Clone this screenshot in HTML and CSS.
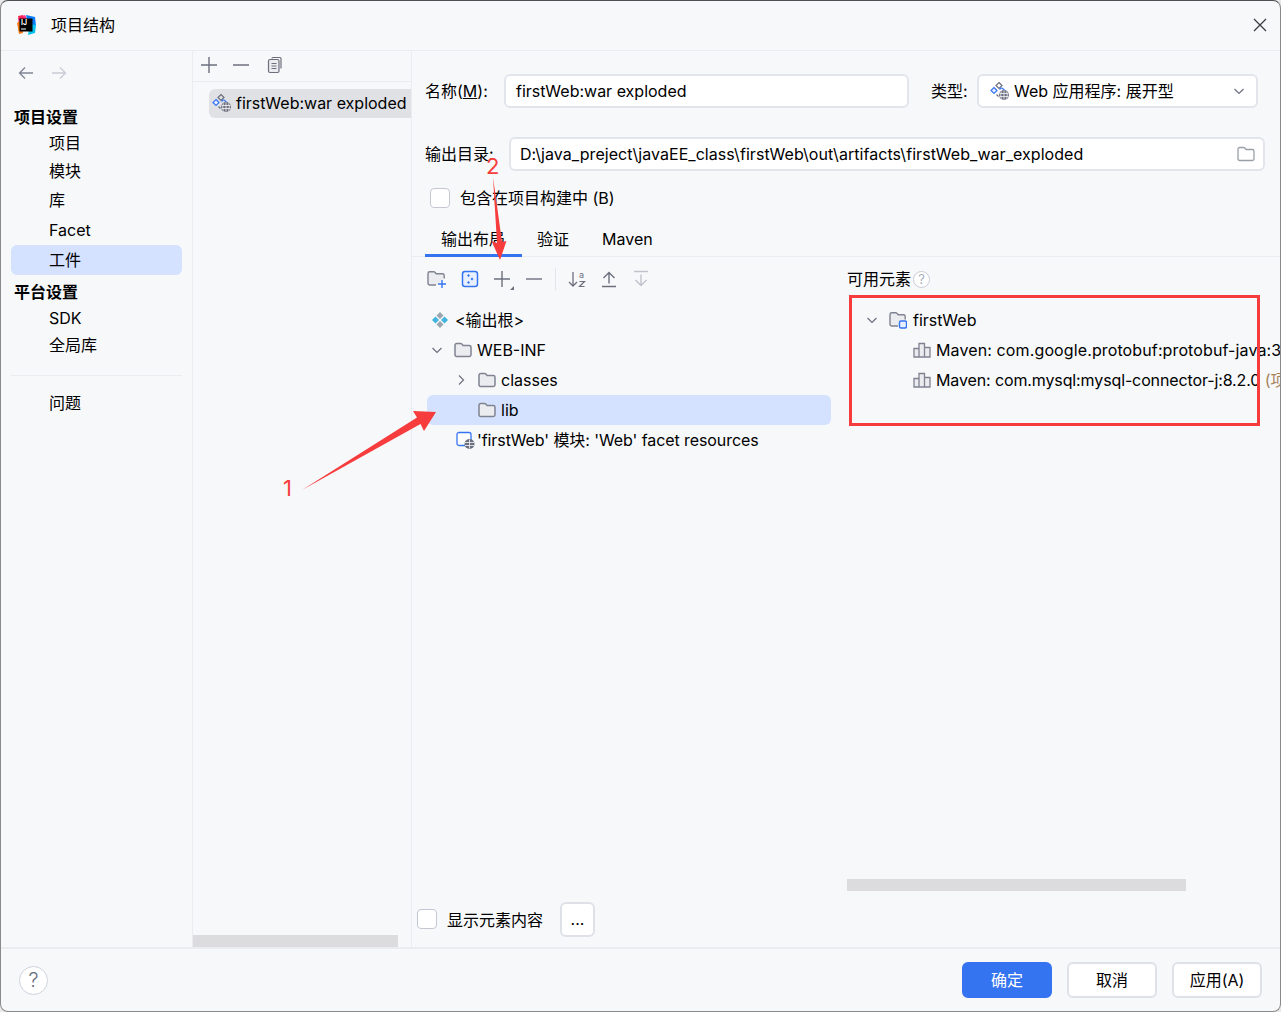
FILE: index.html
```html
<!DOCTYPE html>
<html lang="zh-CN">
<head>
  <meta charset="UTF-8">
  <title>项目结构</title>
  <link rel="stylesheet" href="styles.css">
</head>
<body>

  <svg class="defs" width="0" height="0">
    <symbol id="folder" viewBox="0 0 18 16">
      <path d="M1 3.200C1 2.200 1.800 1.500 2.700 1.500h3.900c.5 0 .9.200 1.200.5l1.300 1.500h6.200c1 0 1.700.7 1.700 1.700v7.600c0 1-.7 1.700-1.700 1.700H2.700c-1 0-1.700-.7-1.700-1.700z" fill="#ebecf0" stroke="#7f8391" stroke-width="1.500"/>
    </symbol>
    <symbol id="artifact" viewBox="0 0 20 20">
      <path d="M9 1.500l3 3-3 3-3-3z" fill="none" stroke="#6c707e" stroke-width="1.200"/>
      <path d="M4 6.500l3 3-3 3-3-3z" fill="#e8f0ff" stroke="#3574f0" stroke-width="1.200"/>
      <path d="M9.500 8.500l1.500-1.500h1l2.500 2" fill="none" stroke="#3574f0" stroke-width="1.200"/>
      <path d="M6.500 13.500l2 2" fill="none" stroke="#6c707e" stroke-width="1.200"/>
      <circle cx="14" cy="14" r="5" fill="#6c707e"/>
      <path d="M9.500 12.500h9M9.500 15.500h9M14 9.500v9M11.500 10.500c-1 2.500-1 5 0 7M16.500 10.500c1 2.500 1 5 0 7" fill="none" stroke="#f7f8fa" stroke-width=".8"/>
    </symbol>
    <symbol id="library" viewBox="0 0 18 16">
      <path d="M1 6.500h5v8.500H1zM6 1.500h5.500V15H6zM11.500 5.500H17V15h-5.500z" fill="#ebecf0" stroke="#7f8391" stroke-width="1.300"/>
    </symbol>
    <symbol id="plus" viewBox="0 0 18 18">
      <path d="M9 1v16M1 9h16" fill="none" stroke="#6c707e" stroke-width="1.400"/>
    </symbol>
    <symbol id="minus" viewBox="0 0 18 18">
      <path d="M1 9h16" fill="none" stroke="#6c707e" stroke-width="1.400"/>
    </symbol>
    <symbol id="chevron-down" viewBox="0 0 12 12">
      <path d="M1.500 4l4.500 4.500L10.500 4" fill="none" stroke="#6c707e" stroke-width="1.200"/>
    </symbol>
    <symbol id="chevron-right" viewBox="0 0 12 12">
      <path d="M4 1.500L8.500 6 4 10.500" fill="none" stroke="#6c707e" stroke-width="1.200"/>
    </symbol>
  </svg>

  <div class="window">

    <div class="titlebar">
      <svg class="logo" width="20" height="20" viewBox="0 0 20 20">
        <path d="M2 3l7-3 2 4-8 6z" fill="#ff318c"/>
        <path d="M1 8l4-3 2 13-4 1z" fill="#f97a12"/>
        <path d="M10 0l9 2 1 9-8-2z" fill="#087cfa"/>
        <path d="M14 9l6 1-1 8-7 2z" fill="#07c3f2"/>
        <path d="M2 1l5-1 1 4-5 1z" fill="#fe2857"/>
        <rect x="3.500" y="3.500" width="13" height="13" fill="#000"/>
        <text class="logo-text" x="5" y="9.500">IJ</text>
        <rect x="5" y="13.500" width="5" height="1" fill="#fff"/>
      </svg>
      <span class="title">项目结构</span>
      <svg class="close" width="14" height="14" viewBox="0 0 14 14">
        <path d="M1 1l12 12M13 1L1 13" fill="none" stroke="#3b3d43" stroke-width="1.300"/>
      </svg>
    </div>

    <div class="content">

      <div class="sidebar">
        <div class="history">
          <svg width="16" height="14" viewBox="0 0 16 14"><path d="M15 7H1.500M7 1.500L1.500 7 7 12.500" fill="none" stroke="#818594" stroke-width="1.300"/></svg>
          <svg width="16" height="14" viewBox="0 0 16 14"><path d="M1 7h13.500M9 1.500L14.500 7 9 12.500" fill="none" stroke="#c9ccd6" stroke-width="1.300"/></svg>
        </div>
        <h4 class="nav-title">项目设置</h4>
        <a class="nav-item h-26" href="#">项目</a>
        <a class="nav-item h-29" href="#">模块</a>
        <a class="nav-item h-30" href="#">库</a>
        <a class="nav-item h-30" href="#">Facet</a>
        <a class="nav-item h-30 active" href="#">工件</a>
        <h4 class="nav-title second">平台设置</h4>
        <a class="nav-item h-26" href="#">SDK</a>
        <a class="nav-item h-28" href="#">全局库</a>
        <div class="nav-sep"></div>
        <a class="nav-item h-28" href="#">问题</a>
      </div>

      <div class="artifacts">
        <div class="artifacts-tools">
          <svg class="tool" width="18" height="18"><use href="#plus"/></svg>
          <svg class="tool" width="18" height="18"><use href="#minus"/></svg>
          <svg class="tool copy-tool" width="18" height="18" viewBox="0 0 18 18">
            <path d="M6 2.500c0-.6.500-1 1-1h7c.6 0 1 .4 1 1v10" fill="none" stroke="#6c707e" stroke-width="1.200"/>
            <rect x="2.500" y="3.500" width="10.500" height="13" rx="1.500" fill="#ebecf0" stroke="#6c707e" stroke-width="1.200"/>
            <path d="M5.500 7.500h5M5.500 10h5M5.500 12.500h5" stroke="#6c707e" stroke-width="1.100"/>
          </svg>
        </div>
        <div class="artifact-item">
          <svg width="20" height="20"><use href="#artifact"/></svg>
          <span>firstWeb:war exploded</span>
        </div>
        <div class="hscroll artifacts-scroll"></div>
      </div>

      <div class="detail">
        <div class="form-row name-row">
          <label class="label-name">名称(<u>M</u>):</label>
          <div class="field field-name">firstWeb:war exploded</div>
          <label class="label-type">类型:</label>
          <div class="field field-type">
            <svg width="20" height="20"><use href="#artifact"/></svg>
            <span>Web 应用程序: 展开型</span>
            <svg class="select-arrow" width="12" height="12"><use href="#chevron-down"/></svg>
          </div>
        </div>

        <div class="form-row dir-row">
          <label class="label-dir">输出目录:</label>
          <div class="field field-dir">
            <span>D:\java_preject\javaEE_class\firstWeb\out\artifacts\firstWeb_war_exploded</span>
            <svg class="dir-folder" width="18" height="16" viewBox="0 0 18 16">
              <path d="M1 3.200C1 2.200 1.800 1.500 2.700 1.500h3.900c.5 0 .9.200 1.200.5l1.300 1.500h6.200c1 0 1.700.7 1.700 1.700v7.600c0 1-.7 1.700-1.700 1.700H2.700c-1 0-1.700-.7-1.700-1.700z" fill="none" stroke="#9a9ea9" stroke-width="1.300"/>
            </svg>
          </div>
        </div>

        <div class="check-row">
          <span class="checkbox"></span>
          <span>包含在项目构建中 (B)</span>
        </div>

        <div class="tabs">
          <a class="tab active" href="#">输出布局</a>
          <a class="tab" href="#">验证</a>
          <a class="tab" href="#">Maven</a>
        </div>

        <div class="layout">
          <div class="layout-left">
            <div class="toolbar">
              <svg class="tool" width="20" height="18" viewBox="0 0 20 18">
                <path d="M9 15H2.800C1.800 15 1 14.300 1 13.300V3.500C1 2.600 1.800 1.800 2.800 1.800h4c.4 0 .8.200 1.100.5l1.300 1.500h6.300c.9 0 1.700.7 1.700 1.700v3" fill="#ebecf0" stroke="#7f8391" stroke-width="1.400"/>
                <path d="M15 10v8M11 14h8" stroke="#3574f0" stroke-width="1.400"/>
              </svg>
              <svg class="tool" width="18" height="18" viewBox="0 0 18 18">
                <rect x="1.500" y="1.500" width="15" height="15" rx="2.500" fill="#e8f0ff" stroke="#3574f0" stroke-width="1.500"/>
                <path d="M7.500 4l1.500 1.500L7.500 7 6 5.500zM11 7.500L12.500 9 11 10.500 9.500 9zM7.500 11L9 12.500 7.500 14 6 12.500z" fill="#3574f0"/>
              </svg>
              <svg class="tool" width="18" height="18"><use href="#plus"/><path d="M21 16v4h-4z" fill="#6c707e"/></svg>
              <svg class="tool" width="18" height="18"><use href="#minus"/></svg>
              <span class="tool-sep"></span>
              <svg class="tool" width="18" height="18" viewBox="0 0 18 18">
                <path d="M5 2v14M1 12l4 4 4-4" fill="none" stroke="#6c707e" stroke-width="1.300"/>
                <text class="sort-a" x="11" y="8">a</text>
                <path d="M11.500 11.500h5l-5 5h5" fill="none" stroke="#6c707e" stroke-width="1.200"/>
              </svg>
              <svg class="tool" width="18" height="18" viewBox="0 0 18 18">
                <path d="M2 16.500h14M9 13.500V2.500M3.500 8l5.500-5.500L14.500 8" fill="none" stroke="#6c707e" stroke-width="1.400"/>
              </svg>
              <svg class="tool" width="18" height="18" viewBox="0 0 18 18">
                <path d="M2 1.500h14M9 4.500v11M3.500 10l5.500 5.500 5.500-5.500" fill="none" stroke="#c0c3cc" stroke-width="1.400"/>
              </svg>
            </div>
            <div class="tree">
              <div class="tree-row root">
                <svg class="node-icon" width="18" height="18" viewBox="0 0 18 18">
                  <path d="M9 1l3.500 3.500L9 8 5.500 4.500z" fill="#9aa7b0"/>
                  <path d="M4.500 5.500L8 9l-3.500 3.500L1 9z" fill="#40b6e0"/>
                  <path d="M13.500 5.500L17 9l-3.500 3.500L10 9z" fill="#40b6e0"/>
                  <path d="M9 10l3.500 3.500L9 17l-3.500-3.500z" fill="#9aa7b0"/>
                </svg>
                <span>&lt;输出根&gt;</span>
              </div>
              <div class="tree-row level-1">
                <svg class="arrow" width="12" height="12"><use href="#chevron-down"/></svg>
                <svg class="node-icon" width="18" height="16"><use href="#folder"/></svg>
                <span>WEB-INF</span>
              </div>
              <div class="tree-row level-2">
                <svg class="arrow" width="12" height="12"><use href="#chevron-right"/></svg>
                <svg class="node-icon" width="18" height="16"><use href="#folder"/></svg>
                <span>classes</span>
              </div>
              <div class="tree-row level-2 leaf selected">
                <svg class="node-icon" width="18" height="16"><use href="#folder"/></svg>
                <span>lib</span>
              </div>
              <div class="tree-row facet">
                <svg class="node-icon" width="19" height="18" viewBox="0 0 19 18">
                  <rect x="1" y="1.500" width="14" height="13" rx="2" fill="#fff" stroke="#3574f0" stroke-width="1.300"/>
                  <circle cx="13.500" cy="13" r="5" fill="#6c707e"/>
                  <path d="M9 11.500h9M9 14.500h9M13.500 8.500v9" stroke="#f7f8fa" stroke-width=".8"/>
                </svg>
                <span>'firstWeb' 模块: 'Web' facet resources</span>
              </div>
            </div>
          </div>

          <div class="layout-right">
            <div class="toolbar available">
              <span>可用元素</span>
              <span class="hint">?</span>
            </div>
            <div class="tree">
              <div class="tree-row module">
                <svg class="arrow" width="12" height="12"><use href="#chevron-down"/></svg>
                <svg class="node-icon" width="18" height="18" viewBox="0 0 18 18">
                  <path d="M9 15H2.800C1.800 15 1 14.300 1 13.300V3.500C1 2.600 1.800 1.800 2.800 1.800h4c.4 0 .8.200 1.100.5l1.300 1.500h5.300c.9 0 1.700.7 1.700 1.700v3" fill="#ebecf0" stroke="#7f8391" stroke-width="1.400"/>
                  <rect x="10.500" y="10" width="7" height="7" rx="1.500" fill="#e8f0ff" stroke="#3574f0" stroke-width="1.400"/>
                </svg>
                <span>firstWeb</span>
              </div>
              <div class="tree-row lib">
                <svg class="node-icon" width="18" height="16"><use href="#library"/></svg>
                <span class="lib-long">Maven: com.google.protobuf:protobuf-java:3.21.9 <em>(项目库)</em></span>
              </div>
              <div class="tree-row lib">
                <svg class="node-icon" width="18" height="16"><use href="#library"/></svg>
                <span class="lib-short">Maven: com.mysql:mysql-connector-j:8.2.0 <em>(项目库)</em></span>
              </div>
            </div>
            <div class="hscroll available-scroll"></div>
          </div>
        </div>

        <div class="show-row">
          <span class="checkbox small"></span>
          <span class="show-text">显示元素内容</span>
          <button class="btn more">...</button>
        </div>
      </div>
    </div>

    <div class="footer">
      <span class="help">?</span>
      <button class="btn primary">确定</button>
      <button class="btn">取消</button>
      <button class="btn">应用(A)</button>
    </div>

    <!-- annotations drawn on top of the screenshot -->
    <div class="mark-box"></div>
    <span class="mark-num num-1">1</span>
    <span class="mark-num num-2">2</span>
    <svg class="mark-arrows" width="1281" height="1012" viewBox="0 0 1281 1012">
      <path d="M302 490L417 417.500 413 411 436 412 424 431 420.500 424z" fill="#f63c3c"/>
      <path d="M493 177L497 243 491.500 241 500 260 506.500 241 502 242z" fill="#f63c3c"/>
    </svg>
  </div>

</body>
</html>
```

FILE: styles.css
```css
* {
  margin: 0;
  padding: 0;
  box-sizing: border-box;
}

body {
  width: 1281px;
  height: 1012px;
  overflow: hidden;
  background-color: #e9e9ec;
  font-family: 'Inter', 'Noto Sans CJK SC', sans-serif;
  font-size: 16px;
  line-height: 20px;
  color: #000;
}

a {
  color: inherit;
  text-decoration: none;
}

.defs {
  position: absolute;
}

.window {
  position: relative;
  width: 1281px;
  height: 1012px;
  display: flex;
  flex-direction: column;
  overflow: hidden;
  background-color: #f7f8fa;
  border: 1px solid #8a8a8a;
  border-top-color: #4a4f52;
  border-radius: 8px;
}

.titlebar {
  height: 50px;
  flex-shrink: 0;
  display: flex;
  align-items: center;
  padding: 0 13px 1px 15px;
  border-bottom: 1px solid #ebecf0;
}

.logo {
  margin-right: 15px;
}

.logo-text {
  font-size: 7px;
  font-weight: 700;
  fill: #fff;
}

.sort-a {
  font-size: 9px;
  fill: #6c707e;
}

.title {
  flex: 1;
}

.content {
  flex: 1;
  display: flex;
  min-height: 0;
}

/* left nav */
.sidebar {
  width: 192px;
  flex-shrink: 0;
  padding: 0 10px;
  border-right: 1px solid #ebecf0;
}

.history {
  display: flex;
  gap: 17px;
  padding: 15px 0 0 7px;
  height: 53px;
}

.nav-title {
  font-size: 16px;
  font-weight: 700;
  line-height: 26px;
  padding-left: 3px;
}

.nav-title.second {
  margin-top: 4px;
}

.nav-item {
  display: flex;
  align-items: center;
  padding-left: 38px;
  border-radius: 6px;
  width: 171px;
}

.h-26 {
  height: 26px;
}

.h-28 {
  height: 28px;
}

.h-29 {
  height: 29px;
}

.h-30 {
  height: 30px;
}

.nav-item.active {
  background-color: #d4e2ff;
}

.nav-sep {
  height: 1px;
  margin: 16px 0 13px;
  background-color: #ebecf0;
}

/* artifact list */
.artifacts {
  width: 219px;
  flex-shrink: 0;
  display: flex;
  flex-direction: column;
  border-right: 1px solid #ebecf0;
}

.artifacts-tools {
  height: 31px;
  flex-shrink: 0;
  display: flex;
  align-items: center;
  gap: 14px;
  padding: 0 0 2px 7px;
  border-bottom: 1px solid #ebecf0;
}

.copy-tool {
  margin-left: 2px;
}

.artifact-item {
  height: 29px;
  margin: 7px 0 0 16px;
  display: flex;
  align-items: center;
  gap: 4px;
  padding: 0 0 1px 3px;
  background-color: #dfe1e5;
  border-radius: 6px 0 0 6px;
  white-space: nowrap;
  overflow: hidden;
}

.hscroll {
  height: 12px;
  background-color: #dcdcde;
}

.artifacts-scroll {
  width: 205px;
  margin-top: auto;
  flex-shrink: 0;
}

/* detail form */
.detail {
  flex: 1;
  min-width: 0;
  display: flex;
  flex-direction: column;
  padding-left: 13px;
}

.form-row {
  display: flex;
  align-items: center;
  flex-shrink: 0;
}

.name-row {
  margin-top: 23px;
  height: 34px;
}

.dir-row {
  margin-top: 29px;
  height: 34px;
}

.label-name {
  width: 79px;
}

.label-type {
  width: 46px;
  margin-left: 22px;
}

.label-dir {
  width: 84px;
}

.field {
  height: 34px;
  display: flex;
  align-items: center;
  padding-left: 10px;
  background-color: #fff;
  border: 2px solid #e3e5ec;
  border-radius: 6px;
  white-space: nowrap;
}

.field-name {
  width: 405px;
}

.field-type {
  width: 281px;
  gap: 4px;
  padding-left: 11px;
}

.field-dir {
  width: 756px;
  padding-left: 9px;
  letter-spacing: .055px;
}

.select-arrow {
  margin-left: auto;
  margin-right: 11px;
}

.dir-folder {
  margin-left: auto;
  margin-right: 8px;
}

.check-row {
  display: flex;
  align-items: center;
  gap: 10px;
  height: 20px;
  margin: 17px 0 0 5px;
  flex-shrink: 0;
}

.checkbox {
  width: 20px;
  height: 20px;
  flex-shrink: 0;
  background-color: #fff;
  border: 1.5px solid #c4c7d3;
  border-radius: 4px;
}

.tabs {
  display: flex;
  height: 32px;
  margin: 17px 0 0 -13px;
  padding-left: 13px;
  flex-shrink: 0;
  border-bottom: 1px solid #ebecf0;
}

.tab {
  display: flex;
  align-items: center;
  padding: 0 16px 4px;
}

.tab.active {
  margin-bottom: -1px;
  border-bottom: 3px solid #3574f0;
  padding: 0 17px 1px 16px;
}

.tab.active + .tab {
  padding: 0 17px 4px 15px;
}

.layout {
  flex: 1;
  min-height: 0;
  display: flex;
  margin-top: 11px;
}

.layout-left {
  width: 422px;
  flex-shrink: 0;
}

.layout-right {
  flex: 1;
  min-width: 0;
  display: flex;
  flex-direction: column;
}

.toolbar {
  height: 22px;
  display: flex;
  align-items: center;
  padding-left: 2px;
  gap: 14px;
}

.tool {
  overflow: visible;
  flex-shrink: 0;
}

.tool-sep {
  width: 1px;
  height: 22px;
  margin: 0 -2px;
  background-color: #e3e5ec;
}

.available {
  padding-left: 0;
  gap: 2px;
}

.hint {
  width: 17px;
  height: 17px;
  display: flex;
  align-items: center;
  justify-content: center;
  font-size: 13px;
  color: #a8adbd;
  background-color: #fff;
  border: 1.5px solid #c9ccd6;
  border-radius: 50%;
}

.tree {
  margin-top: 15px;
}

.tree-row {
  height: 30px;
  display: flex;
  align-items: center;
  white-space: nowrap;
}

.layout-left .tree-row {
  width: 404px;
  margin-left: 2px;
  border-radius: 6px;
}

.tree-row.selected {
  background-color: #d4e2ff;
}

.arrow {
  margin-right: 11px;
  flex-shrink: 0;
}

.node-icon {
  margin-right: 5px;
  flex-shrink: 0;
}

.root {
  padding-left: 4px;
}

.root .node-icon {
  margin-right: 6px;
}

.level-1 {
  padding-left: 4px;
}

.level-2 {
  padding-left: 28px;
}

.level-2.leaf {
  padding-left: 51px;
}

.facet {
  padding-left: 29px;
  letter-spacing: -.08px;
}

.facet .node-icon {
  margin-right: 2px;
}

.module {
  padding-left: 19px;
}

.module .node-icon {
  margin-right: 6px;
}

.lib {
  padding-left: 66px;
}

.lib-long {
  letter-spacing: .12px;
}

.lib-short {
  letter-spacing: -.12px;
}

.tree-row em {
  font-style: normal;
  color: #a8835a;
}

.available-scroll {
  width: 339px;
  margin-top: auto;
  flex-shrink: 0;
}

.show-row {
  height: 34px;
  margin: 11px 0 11px -8px;
  display: flex;
  align-items: center;
  flex-shrink: 0;
}

.show-row .checkbox {
  margin-right: 10px;
}

.show-text {
  width: 113px;
  padding-top: 2px;
}

.btn {
  width: 90px;
  height: 36px;
  font-family: inherit;
  font-size: 16px;
  line-height: 20px;
  background-color: #fff;
  border: 2px solid #dfe1e8;
  border-radius: 6px;
}

.more {
  width: 35px;
  height: 35px;
}

.footer {
  height: 64px;
  flex-shrink: 0;
  display: flex;
  align-items: center;
  gap: 15px;
  padding: 0 18px 0 18px;
  border-top: 2px solid #ebecf0;
}

.help {
  width: 29px;
  height: 29px;
  margin-right: auto;
  display: flex;
  align-items: center;
  justify-content: center;
  font-size: 20px;
  font-weight: 300;
  color: #6c707e;
  background-color: #fff;
  border: 1px solid #cfd2dc;
  border-radius: 50%;
}

.btn.primary {
  color: #fff;
  background-color: #3574f0;
  border-color: #3574f0;
}

/* red notes on top */
.mark-box {
  position: absolute;
  left: 848px;
  top: 294px;
  width: 411px;
  height: 131px;
  border: 3px solid #f63c3c;
}

.mark-num {
  position: absolute;
  font-size: 22px;
  line-height: 24px;
  color: #f63c3c;
}

.num-1 {
  left: 282px;
  top: 475px;
}

.num-2 {
  left: 485px;
  top: 153px;
}

.mark-arrows {
  position: absolute;
  left: -1px;
  top: -1px;
}
```
